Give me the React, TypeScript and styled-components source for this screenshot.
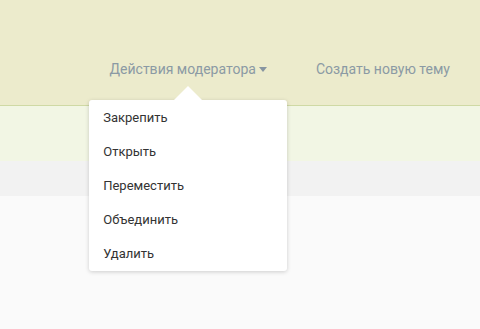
import styled, { createGlobalStyle } from 'styled-components'

const GlobalStyle = createGlobalStyle`
  html, body {
    margin: 0;
    padding: 0;
    background: #fafafa;
    font-family: Roboto, "Noto Sans", sans-serif;
  }
`

const Page = styled.div`
  display: flex;
  flex-direction: column;
  min-height: 329px;
  background: #fafafa;
`

const Header = styled.header`
  display: flex;
  justify-content: flex-end;
  align-items: center;
  height: 106px;
  padding: 0 30px 0 0;
  gap: 49px;
  background-color: #ecebcc;
  border-bottom: 1px solid #cfd9a4;
  box-sizing: border-box;
`

const NavItem = styled.div`
  position: relative;
  display: flex;
  align-items: center;
  gap: 3px;
  margin-top: 32px;
  font-size: 14px;
  color: #8b9aa4;
  cursor: pointer;
`

const Caret = styled.span`
  display: inline-block;
  width: 0;
  height: 0;
  border-left: 4px solid transparent;
  border-right: 4px solid transparent;
  border-top: 5px solid #8795a1;
  margin-top: 1px;
`

const Dropdown = styled.div`
  position: absolute;
  top: 39px;
  left: 50%;
  transform: translateX(-50%);
  width: 198px;
  padding-top: 1px;
  background: #fff;
  border-radius: 3px;
  box-shadow: 0 1px 4px rgba(0, 0, 0, 0.18);
  z-index: 10;

  &::before {
    content: '';
    position: absolute;
    top: -14px;
    left: 50%;
    margin-left: -14px;
    border-left: 14px solid transparent;
    border-right: 14px solid transparent;
    border-bottom: 14px solid #fff;
  }
`

const MenuItem = styled.div`
  padding: 0 14px;
  height: 34px;
  line-height: 34px;
  font-size: 13px;
  color: #333;
  white-space: nowrap;
`

const SubBar = styled.div`
  height: 55px;
  background: #f2f6e4;
`

const GreyBar = styled.div`
  height: 35px;
  background: #f2f2f2;
`

const Content = styled.div`
  flex: 1;
  background: #fafafa;
`

const items = ['Закрепить', 'Открыть', 'Переместить', 'Объединить', 'Удалить']

export default function App(): JSX.Element {
  return (
    <>
      <GlobalStyle />
      <Page>
        <Header>
          <NavItem>
            Действия модератора
            <Caret />
            <Dropdown>
              {items.map((item) => (
                <MenuItem key={item}>{item}</MenuItem>
              ))}
            </Dropdown>
          </NavItem>
          <NavItem>Создать новую тему</NavItem>
        </Header>
        <SubBar />
        <GreyBar />
        <Content />
      </Page>
    </>
  )
}
